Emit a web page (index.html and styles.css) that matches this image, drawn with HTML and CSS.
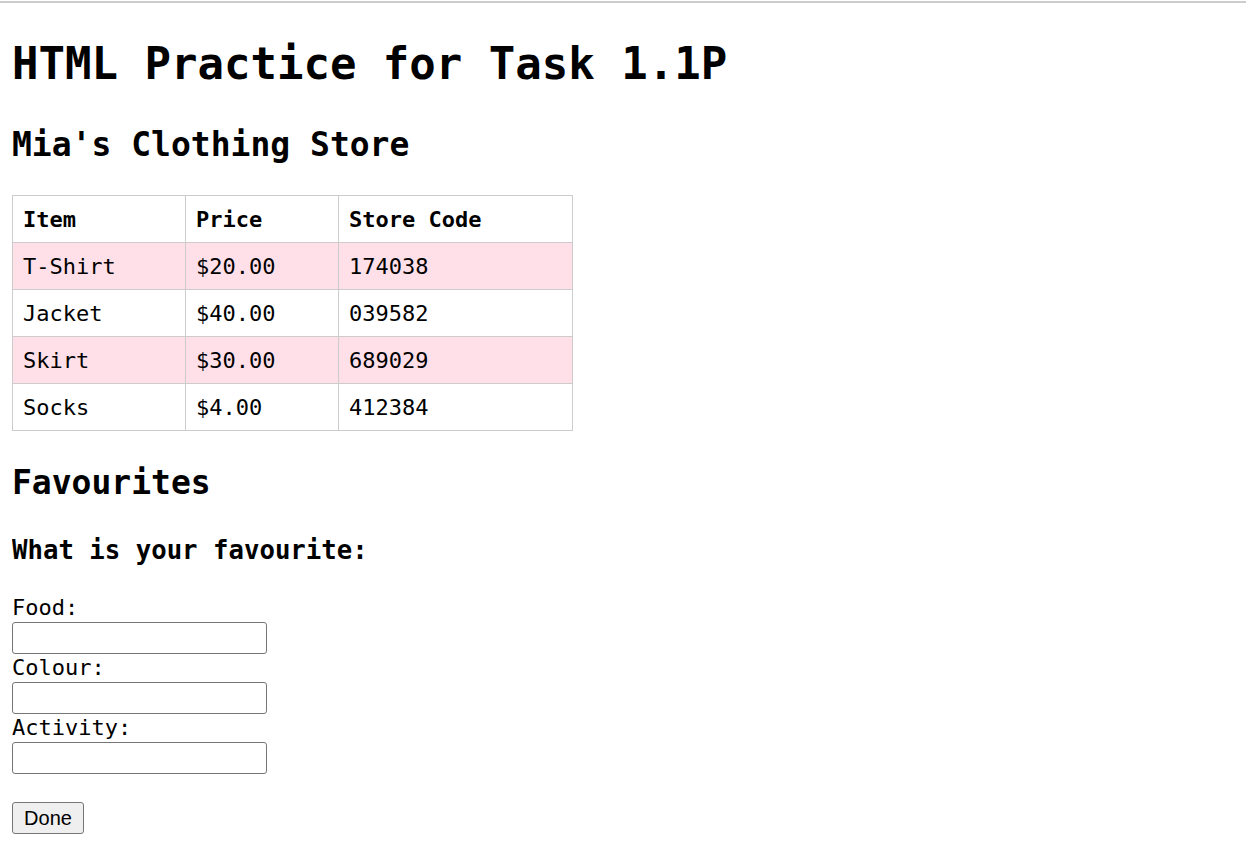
FILE: index.html
```html
<!DOCTYPE html>
<html lang="en">
<head>
<meta charset="utf-8">
<title>HTML Practice for Task 1.1P</title>
<link rel="stylesheet" href="styles.css">
</head>
<body>
<h1>HTML Practice for Task 1.1P</h1>
<h2>Mia's Clothing Store</h2>
<table class="store">
  <colgroup>
    <col class="c-item">
    <col class="c-price">
    <col class="c-code">
  </colgroup>
  <thead>
    <tr><th>Item</th><th>Price</th><th>Store Code</th></tr>
  </thead>
  <tbody>
    <tr class="pink"><td>T-Shirt</td><td>$20.00</td><td>174038</td></tr>
    <tr><td>Jacket</td><td>$40.00</td><td>039582</td></tr>
    <tr class="pink"><td>Skirt</td><td>$30.00</td><td>689029</td></tr>
    <tr><td>Socks</td><td>$4.00</td><td>412384</td></tr>
  </tbody>
</table>
<h2>Favourites</h2>
<h3>What is your favourite:</h3>
<form class="fav">
  <label class="lbl" for="food">Food:</label>
  <input class="field" type="text" id="food">
  <label class="lbl" for="colour">Colour:</label>
  <input class="field" type="text" id="colour">
  <label class="lbl" for="activity">Activity:</label>
  <input class="field" type="text" id="activity">
  <button class="done" type="button">Done</button>
</form>
</body>
</html>
```
FILE: styles.css
```css
html {
  overflow: hidden;
  background: linear-gradient(to bottom, #ffffff 0, #ffffff 1px, #cdcdcd 1px, #cdcdcd 3px, #ffffff 3px) no-repeat;
  background-color: #ffffff;
}
body {
  margin: 0 12px;
  padding-top: 3px;
  font-family: "DejaVu Sans Mono", "Liberation Mono", monospace;
  font-size: 22px;
  line-height: 28px;
  color: #000;
}
h1 {
  font-size: 44px;
  line-height: 54px;
  padding-top: 2px;
  margin: 32px 0;
  font-weight: bold;
}
h2 {
  font-size: 33px;
  line-height: 40px;
  padding-top: 2px;
  margin: 30px 0;
  font-weight: bold;
}
h3 {
  font-size: 25.7px;
  line-height: 31px;
  padding-top: 2px;
  margin: 28px 0;
  font-weight: bold;
}
.store {
  border-collapse: collapse;
  table-layout: fixed;
  width: 561px;
}
.c-item { width: 173px; }
.c-price { width: 153px; }
.c-code { width: 234px; }
.store th,
.store td {
  border: 1px solid #cccccc;
  padding: 10px 10px 8px;
  text-align: left;
  line-height: 28px;
}
.store th {
  font-weight: bold;
}
.store tr.pink td {
  background: #ffe0e9;
}
.fav {
  display: flex;
  flex-direction: column;
  align-items: flex-start;
}
.lbl {
  display: block;
  line-height: 28px;
}
.field {
  box-sizing: border-box;
  width: 255px;
  height: 32px;
  margin: 0;
  border: 1px solid #767676;
  border-radius: 3px;
  background: #fff;
  padding: 2px 3px;
  font: 20px "Liberation Sans", Arial, sans-serif;
}
.done {
  box-sizing: border-box;
  margin-top: 28px;
  height: 32px;
  width: 72px;
  padding: 0 9px;
  border: 1px solid #767676;
  border-radius: 3px;
  background: #efefef;
  color: #000;
  font: 20px "Liberation Sans", Arial, sans-serif;
}
```
